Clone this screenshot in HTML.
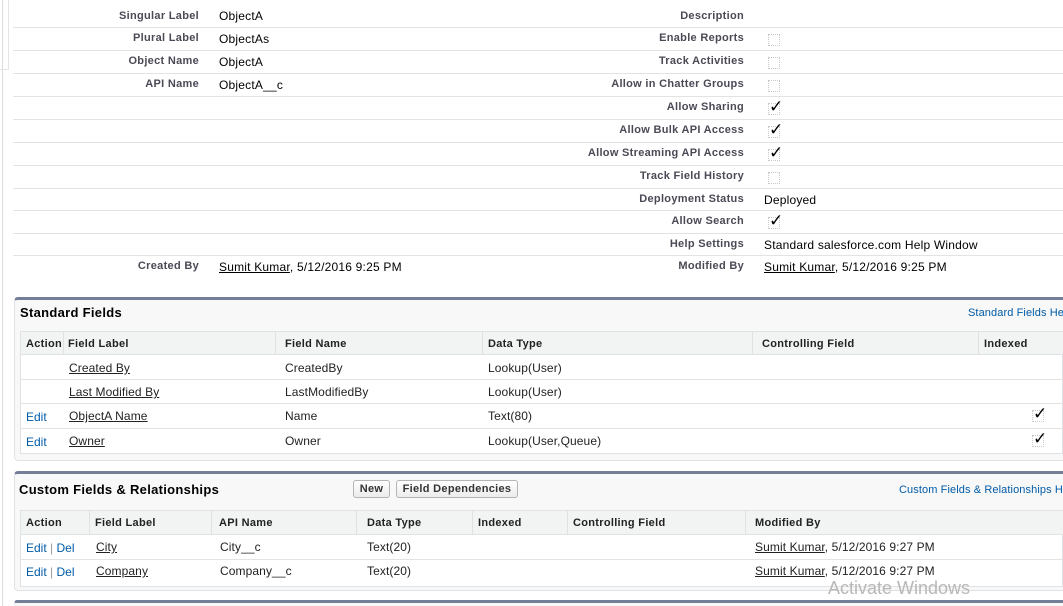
<!DOCTYPE html>
<html><head><meta charset="utf-8">
<style>
*{margin:0;padding:0;box-sizing:border-box}
html,body{width:1063px;height:606px;overflow:hidden}
body{background:#fff;font-family:"Liberation Sans",Arial,sans-serif;position:relative;color:#000}
.a{position:absolute;white-space:nowrap}
.l{font-weight:bold;font-size:11px;color:#4a4a56;text-align:right;letter-spacing:0.3px}
.v{font-size:12px;color:#000;letter-spacing:0.2px}
.hr{position:absolute;height:1px;background:#e3e3e3}
.cb{position:absolute;width:12px;height:12px;border:1px dotted #c8c8c8}
.ck{position:absolute;font-size:17px;line-height:12px;color:#000;left:0;top:-3px}
u{text-decoration:underline}
.panel{position:absolute;left:14px;width:1060px;background:#f8f8f8;border:1px solid #e0e3e5;border-top:3px solid #747e96;border-radius:4px 0 0 4px}
.th{font-weight:bold;font-size:11px;color:#222;letter-spacing:0.3px}
.td{font-size:12px;color:#222;letter-spacing:0.1px}
.lnk{color:#015ba7;font-size:12px}
.vl{position:absolute;width:1px;background:#dfe1e3}
.btn{position:absolute;height:18px;border:1px solid #b5b5b5;border-radius:3px;background:linear-gradient(#fff,#ececec);font-weight:bold;font-size:11px;color:#333;text-align:center;line-height:16px;letter-spacing:0.3px}
</style></head><body>
<div style="position:absolute;left:2px;top:0;width:1px;height:606px;background:#dedede"></div>
<div style="position:absolute;left:0;top:0;width:9px;height:24px;border-right:1px solid #e5e5e5"></div>
<div style="position:absolute;left:0;top:24px;width:9px;height:46px;border-right:1px solid #e5e5e5;border-bottom:1px solid #e5e5e5"></div>

<div class="hr" style="left:13px;top:27px;width:1050px"></div>
<div class="hr" style="left:13px;top:50px;width:1050px"></div>
<div class="hr" style="left:13px;top:73px;width:1050px"></div>
<div class="hr" style="left:13px;top:96px;width:1050px"></div>
<div class="hr" style="left:13px;top:119px;width:1050px"></div>
<div class="hr" style="left:13px;top:142px;width:1050px"></div>
<div class="hr" style="left:13px;top:165px;width:1050px"></div>
<div class="hr" style="left:13px;top:188px;width:1050px"></div>
<div class="hr" style="left:13px;top:210px;width:1050px"></div>
<div class="hr" style="left:13px;top:233px;width:1050px"></div>
<div class="hr" style="left:13px;top:255px;width:1050px"></div>

<div class="a l" style="right:864px;top:10px">Singular Label</div>
<div class="a l" style="right:864px;top:32px">Plural Label</div>
<div class="a l" style="right:864px;top:55px">Object Name</div>
<div class="a l" style="right:864px;top:78px">API Name</div>
<div class="a l" style="right:864px;top:260px">Created By</div>
<div class="a v" style="left:219px;top:9px">ObjectA</div>
<div class="a v" style="left:219px;top:32px">ObjectAs</div>
<div class="a v" style="left:219px;top:55px">ObjectA</div>
<div class="a v" style="left:219px;top:78px">ObjectA__c</div>
<div class="a v" style="left:219px;top:260px"><u>Sumit Kumar</u>, 5/12/2016 9:25 PM</div>

<div class="a l" style="right:319px;top:10px">Description</div>
<div class="a l" style="right:319px;top:32px">Enable Reports</div>
<div class="a l" style="right:319px;top:55px">Track Activities</div>
<div class="a l" style="right:319px;top:78px">Allow in Chatter Groups</div>
<div class="a l" style="right:319px;top:101px">Allow Sharing</div>
<div class="a l" style="right:319px;top:124px">Allow Bulk API Access</div>
<div class="a l" style="right:319px;top:147px">Allow Streaming API Access</div>
<div class="a l" style="right:319px;top:170px">Track Field History</div>
<div class="a l" style="right:319px;top:193px">Deployment Status</div>
<div class="a l" style="right:319px;top:215px">Allow Search</div>
<div class="a l" style="right:319px;top:238px">Help Settings</div>
<div class="a l" style="right:319px;top:260px">Modified By</div>

<div class="cb" style="left:768px;top:34px"></div>
<div class="cb" style="left:768px;top:57px"></div>
<div class="cb" style="left:768px;top:80px"></div>
<div class="cb" style="left:768px;top:103px"><span class="ck">✓</span></div>
<div class="cb" style="left:768px;top:126px"><span class="ck">✓</span></div>
<div class="cb" style="left:768px;top:149px"><span class="ck">✓</span></div>
<div class="cb" style="left:768px;top:172px"></div>
<div class="a v" style="left:764px;top:193px">Deployed</div>
<div class="cb" style="left:768px;top:217px"><span class="ck">✓</span></div>
<div class="a v" style="left:764px;top:238px">Standard salesforce.com Help Window</div>
<div class="a v" style="left:764px;top:260px"><u>Sumit Kumar</u>, 5/12/2016 9:25 PM</div>

<div class="panel" style="top:297px;height:164px"></div>
<div class="a" style="left:20px;top:305px;font-weight:bold;font-size:13px;color:#000;letter-spacing:0.3px">Standard Fields</div>
<div class="a lnk" style="left:968px;top:307px;font-size:11px;letter-spacing:0.1px">Standard Fields Help</div>
<div style="position:absolute;left:20px;top:331px;width:1043px;height:123px;background:#fff;border:1px solid #e0e3e5"></div>
<div style="position:absolute;left:21px;top:332px;width:1042px;height:23px;background:#f2f3f3;border-bottom:1px solid #e0e3e5"></div>
<div class="vl" style="left:63px;top:332px;height:23px"></div>
<div class="vl" style="left:275px;top:332px;height:23px"></div>
<div class="vl" style="left:482px;top:332px;height:23px"></div>
<div class="vl" style="left:752px;top:332px;height:23px"></div>
<div class="vl" style="left:978px;top:332px;height:23px"></div>
<div class="a th" style="left:26px;top:338px">Action</div>
<div class="a th" style="left:68px;top:338px">Field Label</div>
<div class="a th" style="left:285px;top:338px">Field Name</div>
<div class="a th" style="left:488px;top:338px">Data Type</div>
<div class="a th" style="left:762px;top:338px">Controlling Field</div>
<div class="a th" style="left:984px;top:338px">Indexed</div>
<div class="hr" style="left:21px;top:379px;width:1042px"></div>
<div class="hr" style="left:21px;top:403px;width:1042px"></div>
<div class="hr" style="left:21px;top:428px;width:1042px"></div>
<div class="a td" style="left:69px;top:361px"><u>Created By</u></div>
<div class="a td" style="left:285px;top:361px">CreatedBy</div>
<div class="a td" style="left:488px;top:361px">Lookup(User)</div>
<div class="a td" style="left:69px;top:385px"><u>Last Modified By</u></div>
<div class="a td" style="left:285px;top:385px">LastModifiedBy</div>
<div class="a td" style="left:488px;top:385px">Lookup(User)</div>
<div class="a lnk" style="left:26px;top:410px">Edit</div>
<div class="a td" style="left:69px;top:409px"><u>ObjectA Name</u></div>
<div class="a td" style="left:285px;top:409px">Name</div>
<div class="a td" style="left:488px;top:409px">Text(80)</div>
<div class="cb" style="left:1032px;top:410px"><span class="ck">✓</span></div>
<div class="a lnk" style="left:26px;top:435px">Edit</div>
<div class="a td" style="left:69px;top:434px"><u>Owner</u></div>
<div class="a td" style="left:285px;top:434px">Owner</div>
<div class="a td" style="left:488px;top:434px">Lookup(User,Queue)</div>
<div class="cb" style="left:1032px;top:435px"><span class="ck">✓</span></div>

<div class="panel" style="top:471px;height:120px"></div>
<div class="a" style="left:19px;top:482px;font-weight:bold;font-size:13px;color:#000;letter-spacing:0.3px">Custom Fields &amp; Relationships</div>
<div class="btn" style="left:353px;top:480px;width:37px">New</div>
<div class="btn" style="left:396px;top:480px;width:122px">Field Dependencies</div>
<div class="a lnk" style="left:899px;top:484px;font-size:11px;letter-spacing:0.1px">Custom Fields &amp; Relationships Help</div>
<div style="position:absolute;left:20px;top:510px;width:1043px;height:77px;background:#fff;border:1px solid #e0e3e5"></div>
<div style="position:absolute;left:21px;top:511px;width:1042px;height:24px;background:#f2f3f3;border-bottom:1px solid #e0e3e5"></div>
<div class="vl" style="left:89px;top:511px;height:24px"></div>
<div class="vl" style="left:211px;top:511px;height:24px"></div>
<div class="vl" style="left:356px;top:511px;height:24px"></div>
<div class="vl" style="left:472px;top:511px;height:24px"></div>
<div class="vl" style="left:567px;top:511px;height:24px"></div>
<div class="vl" style="left:745px;top:511px;height:24px"></div>
<div class="a th" style="left:26px;top:517px">Action</div>
<div class="a th" style="left:95px;top:517px">Field Label</div>
<div class="a th" style="left:219px;top:517px">API Name</div>
<div class="a th" style="left:367px;top:517px">Data Type</div>
<div class="a th" style="left:478px;top:517px">Indexed</div>
<div class="a th" style="left:573px;top:517px">Controlling Field</div>
<div class="a th" style="left:755px;top:517px">Modified By</div>
<div class="hr" style="left:21px;top:559px;width:1042px"></div>
<div class="a lnk" style="left:26px;top:541px">Edit <span style="color:#999">|</span> Del</div>
<div class="a td" style="left:96px;top:540px"><u>City</u></div>
<div class="a td" style="left:220px;top:540px">City__c</div>
<div class="a td" style="left:367px;top:540px">Text(20)</div>
<div class="a td" style="left:755px;top:540px"><u>Sumit Kumar</u>, 5/12/2016 9:27 PM</div>
<div class="a lnk" style="left:26px;top:565px">Edit <span style="color:#999">|</span> Del</div>
<div class="a td" style="left:96px;top:564px"><u>Company</u></div>
<div class="a td" style="left:220px;top:564px">Company__c</div>
<div class="a td" style="left:367px;top:564px">Text(20)</div>
<div class="a td" style="left:755px;top:564px"><u>Sumit Kumar</u>, 5/12/2016 9:27 PM</div>

<div class="panel" style="top:600px;height:6px;border-bottom:none"></div>

<div class="a" style="left:828px;top:578px;font-size:18px;color:#b8b8b8">Activate Windows</div>
</body></html>
